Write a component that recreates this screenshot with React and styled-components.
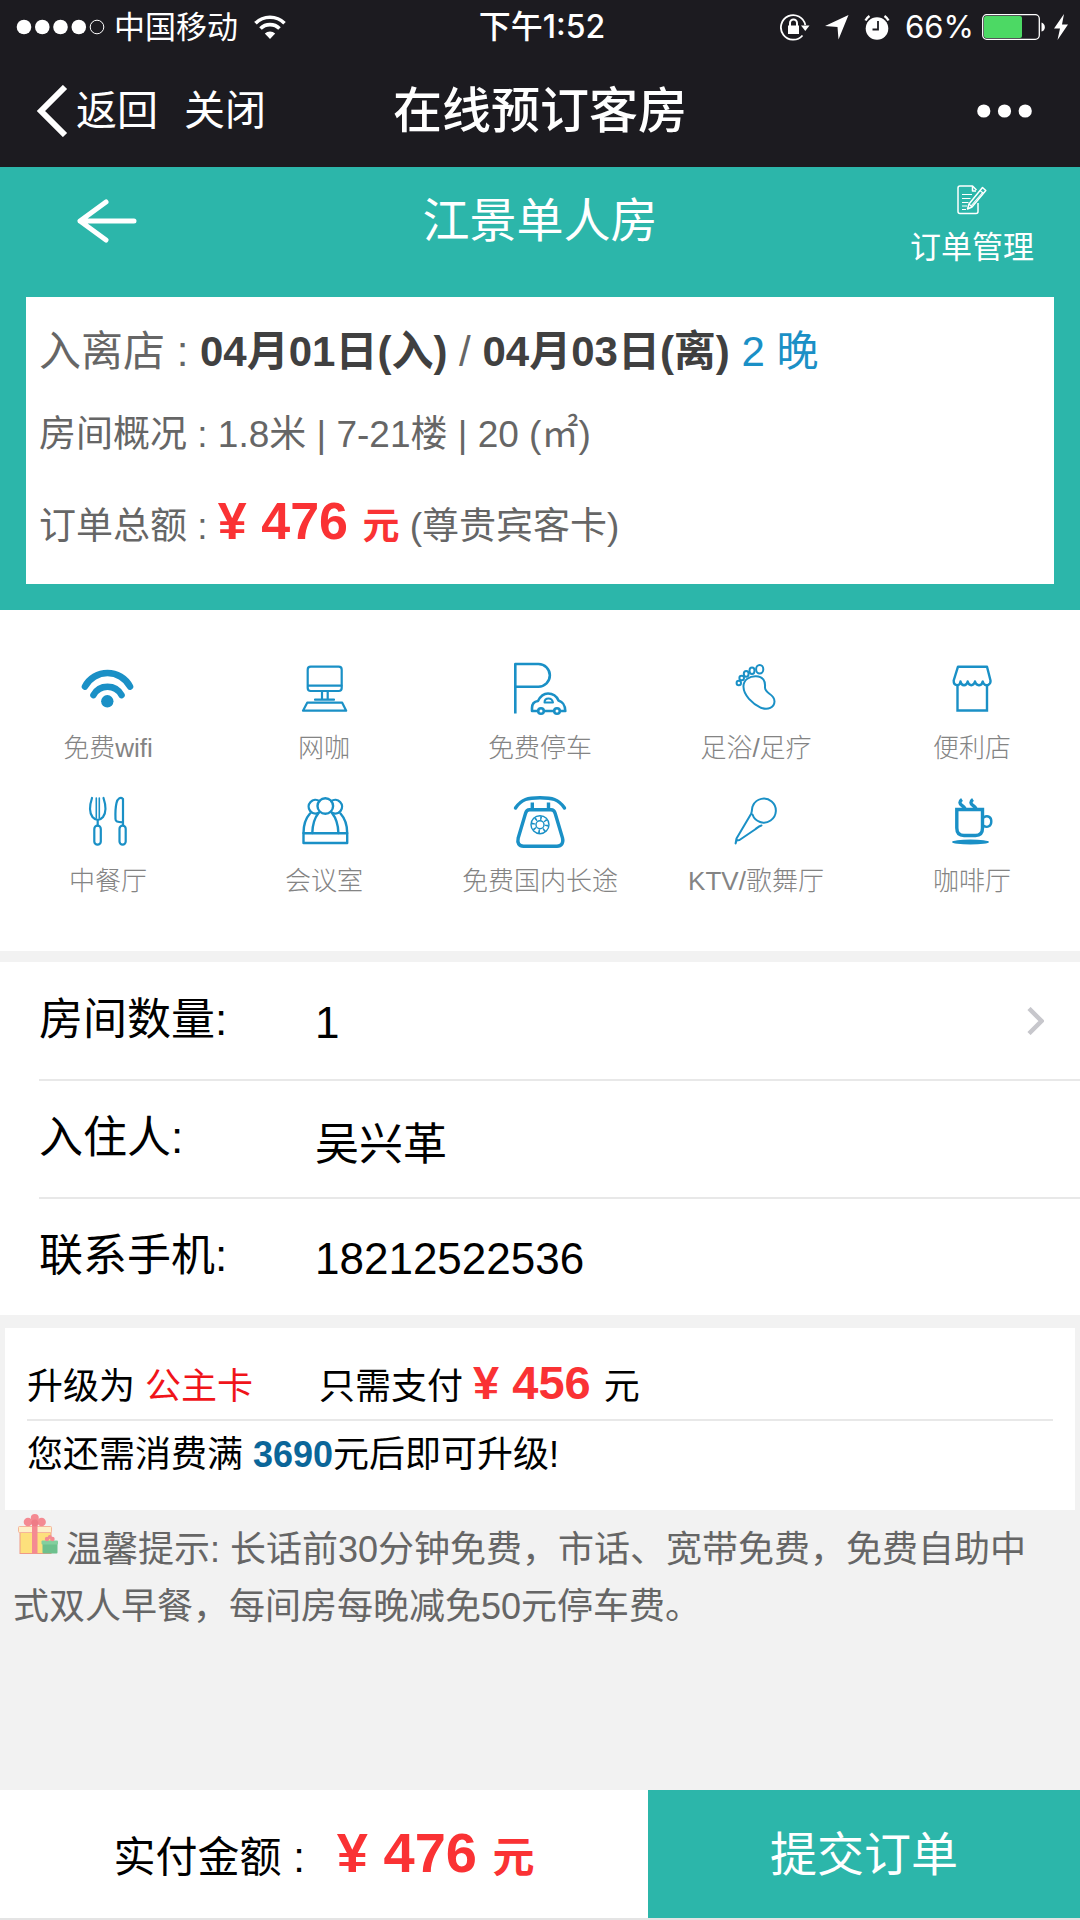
import { useState } from "react";
import styled, { createGlobalStyle } from "styled-components";

const teal = "#2cb6aa";
const blue = "#1a90c6";
const red = "#fa3234";

const GlobalStyle = createGlobalStyle`
  * {
    box-sizing: border-box;
  }

  body {
    margin: 0;
    background: #f2f2f2;
    font-family: "Liberation Sans", "Noto Sans CJK SC", sans-serif;
    color: #000;
  }

  button,
  input,
  select {
    margin: 0;
    padding: 0;
    border: 0;
    background: none;
    color: inherit;
    font: inherit;
  }

  a {
    color: inherit;
    text-decoration: none;
  }

  svg {
    display: block;
    flex: none;
  }
`;

const Page = styled.div`
  display: flex;
  flex-direction: column;
  min-height: 100vh;
`;

const StatusBar = styled.div`
  display: grid;
  grid-template-columns: 1fr auto 1fr;
  align-items: center;
  height: 54px;
  padding: 0 12px 0 16px;
  background: #1c1b20;
  color: #fff;
  font-family: Inter, "Noto Sans CJK SC", sans-serif;
  font-size: 31px;
  line-height: 36px;
`;

const StatusGroup = styled.div`
  display: flex;
  align-items: center;
  justify-content: ${(props) => props.$align || "flex-start"};
  gap: ${(props) => props.$gap}px;
`;

const Clock = styled.div`
  font-size: 32px;
  font-weight: 500;
`;

const NavBar = styled.div`
  display: grid;
  grid-template-columns: 1fr auto 1fr;
  align-items: center;
  height: 113px;
  padding: 0 36px;
  background: #1c1b20;
  color: #fff;
`;

const NavActions = styled.div`
  display: flex;
  gap: 26px;
`;

const NavButton = styled.button`
  display: flex;
  align-items: center;
  gap: 8px;
  font-size: 41px;
  line-height: 56px;
`;

const NavTitle = styled.div`
  font-size: 49px;
  font-weight: 500;
  line-height: 56px;
`;

const MoreButton = styled.button`
  justify-self: end;
  padding: 0 12px;
`;

const Hero = styled.section`
  padding: 0 26px 26px;
  background: ${teal};
`;

const HeroHeader = styled.header`
  display: grid;
  grid-template-columns: 1fr auto 1fr;
  align-items: start;
  padding: 18px 20px 34px;
  color: #fff;
`;

const BackButton = styled.button`
  display: flex;
  align-items: center;
  justify-self: start;
  height: 72px;
  padding: 0 30px;
`;

const RoomTitle = styled.h1`
  margin: 0;
  font-size: 47px;
  font-weight: 400;
  line-height: 72px;
`;

const OrdersLink = styled.a`
  display: flex;
  flex-direction: column;
  align-items: center;
  justify-self: end;
  gap: 16px;
  height: 78px;
  font-size: 31px;
  line-height: 34px;
`;

const Summary = styled.div`
  padding: 15px 13px 8px;
  background: #fff;
  color: #666;
`;

const SummaryRow = styled.div`
  font-size: ${(props) => (props.$large ? 42 : 37)}px;
  line-height: ${(props) => props.$height}px;
  white-space: nowrap;
`;

const StayDate = styled.b`
  color: #404040;
`;

const Nights = styled.span`
  color: ${blue};
`;

const Price = styled.b`
  color: ${red};
  font-size: ${(props) => props.$size}px;
  line-height: 1;
`;

const PriceUnit = styled.b`
  color: ${red};
`;

const Amenities = styled.ul`
  display: grid;
  grid-template-columns: repeat(5, 1fr);
  row-gap: 29px;
  margin: 0;
  padding: 49px 0 55px;
  list-style: none;
  background: #fff;
`;

const Amenity = styled.li`
  display: flex;
  flex-direction: column;
  align-items: center;
  gap: 14px;
  color: #848484;
  font-size: 26px;
  font-weight: 300;
  line-height: 30px;
  white-space: nowrap;
`;

const Form = styled.form`
  margin-top: 11px;
  padding: 1px 0 0 39px;
  background: #fff;
`;

const Field = styled.div`
  display: grid;
  grid-template-columns: 276px 1fr auto;
  align-items: center;
  height: 118px;
  padding-right: 36px;
  border-bottom: 2px solid #e8e8e8;
  font-size: 44px;
  line-height: 60px;

  &:last-child {
    height: 116px;
    border-bottom: 0;
  }
`;

const FieldLabel = styled.label`
  padding-bottom: 2px;
`;

const FieldInput = styled.input`
  width: 100%;
  height: 64px;
  padding-top: 4px;
  outline: 0;
`;

const FieldSelect = styled.select`
  width: 100%;
  height: 64px;
  padding-top: 4px;
  appearance: none;
  outline: 0;
`;

const Upgrade = styled.section`
  margin: 13px 5px 0;
  padding: 25px 22px 21px;
  background: #fff;
  font-size: 36px;
`;

const UpgradeRow = styled.div`
  display: flex;
  align-items: baseline;
  gap: 66px;
  height: 68px;
  line-height: 68px;
  border-bottom: ${(props) => (props.$divided ? "2px solid #e8e8e8" : "0")};
`;

const CardName = styled.span`
  color: #f0141a;
`;

const Spend = styled.b`
  color: #0b6699;
`;

const Tip = styled.p`
  margin: 0;
  padding: 11px 24px 0 13px;
  color: #666;
  font-size: 36px;
  line-height: 57px;

  svg {
    display: inline-block;
    margin: -8px 8px 0 5px;
    vertical-align: 8px;
  }
`;

const PayBar = styled.footer`
  display: grid;
  grid-template-columns: 3fr 2fr;
  height: 130px;
  margin-top: auto;
  border-bottom: 2px solid #e4e4e4;
`;

const PayTotal = styled.div`
  display: flex;
  align-items: baseline;
  justify-content: center;
  gap: 32px;
  padding-top: 8px;
  background: #fff;
  font-size: 42px;
  line-height: 120px;
`;

const SubmitButton = styled.button`
  padding-bottom: 8px;
  background: ${teal};
  color: #fff;
  font-size: 47px;
`;

const LineIcon = ({ width = 2.2, children }) => (
  <svg
    width="60"
    height="60"
    viewBox="0 0 60 60"
    fill="none"
    stroke={blue}
    strokeWidth={width}
    strokeLinecap="round"
    strokeLinejoin="round"
    aria-hidden="true"
  >
    {children}
  </svg>
);

const WifiIcon = () => (
  <LineIcon width={6.6}>
    <path d="M7 27.5A25.5 25.5 0 0 1 52 27.5" />
    <path d="M15.5 36A16 16 0 0 1 43.5 36" />
    <circle cx="29.3" cy="42.3" r="6.2" fill={blue} stroke="none" />
  </LineIcon>
);

const ComputerIcon = () => (
  <LineIcon>
    <rect x="13.7" y="7.7" width="34" height="24.3" rx="3" />
    <path d="M14 26.7H47.5M28 32.5V40M33.7 32.5V40M21 40.7H40" />
    <path d="M13.2 43.7H48.2L52.2 51.7H9L13.2 43.7Z" />
  </LineIcon>
);

const ParkingIcon = () => (
  <LineIcon width={2.6}>
    <path d="M5.3 54.5V5H28.5A11.3 11.3 0 0 1 28.5 27.7H5.3" strokeLinecap="butt" />
    <path d="M27.5 52H22V49C22 45 24.5 42.5 28 42C30.5 37 33 34.5 38 34.5C43.5 34.5 46.5 37 48.5 41.5C53 43 55 45.5 55.3 52H50.5M34.5 52H43.5" />
    <path d="M34.5 43.5C34.5 40.5 36.5 39.5 38.5 39.5C41 39.5 42.5 41 43 43.5Z" strokeWidth="2" />
    <circle cx="31" cy="52" r="2.8" />
    <circle cx="47" cy="52" r="2.8" />
  </LineIcon>
);

const FootIcon = () => (
  <LineIcon width={2}>
    <ellipse cx="33.7" cy="10.2" rx="3.6" ry="4.3" />
    <ellipse cx="26" cy="11.7" rx="2.5" ry="3.2" />
    <ellipse cx="20.2" cy="14.8" rx="2.4" ry="2.9" />
    <circle cx="15.7" cy="19" r="2.3" />
    <circle cx="12.8" cy="24" r="2.2" />
    <path d="M17.5 28C17 20.5 24 17 30 17.2C37 17.5 39.5 22 39 28C38.5 35.5 48.5 34 48.5 42.5C48.3 48.5 42 51.5 35 48.8C26 44.5 17.7 36 17.5 28Z" />
  </LineIcon>
);

const StoreIcon = () => (
  <LineIcon width={2.4}>
    <path d="M16 7.7H45L48.5 21.5C49 25.5 44.5 28 41.5 24.5L40.7 22.5C40 27 34.5 28 33 22.5C31.5 27.5 27 27.5 25.7 22.5C24.5 27.5 19.5 27.5 18.5 22.5C18 27.5 11.5 27.5 11.7 21.5Z" />
    <path d="M15.5 27V51.5H45V27" strokeLinejoin="miter" />
  </LineIcon>
);

const CutleryIcon = () => (
  <LineIcon>
    <path d="M14 6C11 15 11.5 21 14.5 25C17.5 28.7 22 28.7 25 25C28 21 28.5 15 25.5 6M19.7 28V33.5" />
    <path d="M18.3 6V26M21.3 6V26" strokeWidth="1.6" />
    <rect x="16.3" y="33.7" width="6.5" height="19" rx="3.2" />
    <path d="M45 33V7C42.5 4.5 39.5 6.5 38.5 11C37.3 16 37.3 22 37.5 27C37.5 29.5 39 30.3 45 30.3" />
    <rect x="41.5" y="33.7" width="6.2" height="19" rx="3.1" />
  </LineIcon>
);

const MeetingIcon = () => (
  <LineIcon width={2.4}>
    <circle cx="31.3" cy="14" r="7.8" />
    <path d="M25.5 9.2A6.8 6.8 0 1 0 25 20.5M37.2 9.2A6.8 6.8 0 1 1 37.7 20.5" />
    <path d="M16 21.5C11.5 26.5 9.5 33 9.5 41M46.5 21.5C51 26.5 53.2 33 53.2 41" />
    <path d="M24.5 21C20.5 26 18.5 33 18.3 41M38 21C42 26 44.2 33 44.4 41" />
    <rect x="9.5" y="41.2" width="43.7" height="9.8" />
  </LineIcon>
);

const PhoneIcon = () => (
  <LineIcon width={3.4}>
    <path d="M5.5 16C11.5 7 18 5.8 30 5.8C42 5.8 48.5 7 54.5 16" />
    <path d="M22.3 10.5V17M38.5 10.5V17" strokeLinecap="butt" />
    <path d="M19.5 17.8H41C43.5 17.8 44.5 19 45.2 21.5L52.5 46C53.7 51 51.5 54.2 47 54.2H13.5C9 54.2 7 51 8.2 46L15.5 21.5C16.2 19 17 17.8 19.5 17.8Z" />
    <g strokeWidth="1.4">
      <circle cx="30" cy="32.7" r="9" />
      <circle cx="30" cy="32.7" r="4" />
      <circle cx="30" cy="32.7" r="6.6" strokeWidth="3.6" strokeDasharray="1.6 3.58" strokeLinecap="butt" />
    </g>
  </LineIcon>
);

const MicIcon = () => (
  <LineIcon width={2}>
    <path d="M26.5 22.5A12 12 0 1 0 27 13.5C25.5 16 26.5 19 25 22L10.5 46.5L9.6 51.5L10.5 48.5L13.5 48L29 37.5C31.5 35.5 33 34 35.5 33.5" />
  </LineIcon>
);

const CoffeeIcon = () => (
  <LineIcon width={3.4}>
    <path d="M14.8 17.5H40.5V36C40.5 41 38 43.5 33.5 43.5H22C17 43.5 14.8 41 14.8 36Z" strokeLinejoin="miter" />
    <path d="M41.5 25.5C46 22.5 49.5 25.5 49.3 29.5C49.3 34 45.5 36.5 41 33.5" strokeWidth="2.4" />
    <path d="M20 7.5C17 9.5 17.5 12 20 13.5C22 14.8 23 16 23.5 17.5M31 7.5C28 9.5 28.5 12 31 13.5C33 14.8 34 16 34.5 17.5" strokeLinecap="butt" />
    <ellipse cx="28.5" cy="50" rx="18.5" ry="2.6" fill={blue} stroke="none" />
  </LineIcon>
);

const SignalDots = () => (
  <svg width="90" height="16" viewBox="0 0 90 16" fill="#fff" aria-hidden="true">
    <circle cx="8" cy="8" r="7.3" />
    <circle cx="26.3" cy="8" r="7.3" />
    <circle cx="44.5" cy="8" r="7.3" />
    <circle cx="62.8" cy="8" r="7.3" />
    <circle cx="81" cy="8" r="6.8" fill="none" stroke="#fff" strokeWidth="1" />
  </svg>
);

const StatusWifi = () => (
  <svg width="32" height="24" viewBox="0 0 32 24" fill="none" stroke="#fff" strokeWidth="3.6" aria-hidden="true">
    <path d="M1.5 8.2A20.5 20.5 0 0 1 30.5 8.2" />
    <path d="M6.5 13.5A13.5 13.5 0 0 1 25.5 13.5" />
    <path d="M16 24L10.8 18.5A7.5 7.5 0 0 1 21.2 18.5Z" fill="#fff" stroke="none" />
  </svg>
);

const RotationLock = () => (
  <svg width="30" height="28" viewBox="0 0 30 28" fill="none" stroke="#fff" strokeWidth="1.8" aria-hidden="true">
    <path d="M22.5 22.5A12.3 12.3 0 1 1 25.3 12" />
    <path d="M21 12.5H29.5L25.3 18Z" fill="#fff" stroke="none" />
    <rect x="8" y="12.5" width="11" height="8.5" fill="#fff" stroke="none" />
    <path d="M10 13V10A3.5 3.5 0 0 1 17 10V13" strokeWidth="2" />
  </svg>
);

const LocationArrow = () => (
  <svg width="24" height="26" viewBox="0 0 24 26" fill="#fff" aria-hidden="true">
    <path d="M23.5 1L13.5 25.5L12.5 13L0 12Z" />
  </svg>
);

const AlarmIcon = () => (
  <svg width="26" height="26" viewBox="0 0 26 26" aria-hidden="true">
    <circle cx="13" cy="14.5" r="11.3" fill="#fff" />
    <path d="M1.5 6.5A12 12 0 0 1 5.5 2M20.5 2A12 12 0 0 1 24.5 6.5" fill="none" stroke="#fff" strokeWidth="2.4" />
    <path d="M14 7V15.5H8.5" fill="none" stroke="#1c1b20" strokeWidth="1.8" />
  </svg>
);

const BatteryIcon = () => (
  <svg width="64" height="26" viewBox="0 0 64 26" aria-hidden="true">
    <rect x="0.7" y="0.7" width="56.6" height="24.6" rx="4" fill="none" stroke="#fff" strokeWidth="1.3" />
    <rect x="2" y="2" width="38" height="22" rx="2" fill="#4cd964" />
    <path d="M59.5 8.5C64 10 64 16.5 59.5 17.5Z" fill="#fff" />
  </svg>
);

const BoltIcon = () => (
  <svg width="14" height="26" viewBox="0 0 14 26" fill="#fff" aria-hidden="true">
    <path d="M10 0L0 14.5H6L3.5 26L14 10.5H8Z" />
  </svg>
);

const OrdersIcon = () => (
  <svg width="30" height="30" viewBox="0 0 30 30" fill="none" stroke="#fff" strokeWidth="1.5" strokeLinejoin="round" aria-hidden="true">
    <path d="M21 18V26.5Q21 28.5 19 28.5H3Q1 28.5 1 26.5V3Q1 1 3 1H15.5L19.5 5" />
    <path d="M15.5 1V6H19" />
    <path d="M5 9.5H15M5 13.5H13.5M5 17.5H11.5M5 21H10M5 24.5H9" strokeWidth="1.2" />
    <path d="M25.5 2.5L28.8 5.5L15 22L10.5 24L12 19Z" />
    <path d="M26 7L14 21M23 5.5L26.5 8.5M12 19L15 22" strokeWidth="1.1" />
  </svg>
);

const GiftIcon = () => (
  <svg width="40" height="40" viewBox="0 0 40 40" aria-hidden="true">
    <rect x="2" y="16" width="31" height="23.5" fill="#fde07c" stroke="#f09a86" />
    <rect x="0.5" y="12.5" width="33" height="6" rx="1" fill="#fdf0c8" stroke="#f5b59a" />
    <rect x="14" y="11" width="5.5" height="28.5" fill="#f48a92" />
    <circle cx="16.8" cy="4" r="4" fill="#f48a92" />
    <circle cx="10" cy="8" r="4.3" fill="#f48a92" />
    <circle cx="23.6" cy="8" r="4.3" fill="#f48a92" />
    <circle cx="16.8" cy="9" r="3.5" fill="#ee7c86" />
    <rect x="24.5" y="29" width="15" height="10.5" rx="1" fill="#6dc08d" />
    <rect x="23.5" y="26.5" width="16.5" height="4" rx="1" fill="#83cf9e" />
    <circle cx="29" cy="25" r="2.2" fill="#f48a92" />
    <circle cx="34.5" cy="25" r="2.2" fill="#f48a92" />
    <circle cx="31.8" cy="23" r="2" fill="#f48a92" />
  </svg>
);

const amenities = [
  { label: "免费wifi", Icon: WifiIcon },
  { label: "网咖", Icon: ComputerIcon },
  { label: "免费停车", Icon: ParkingIcon },
  { label: "足浴/足疗", Icon: FootIcon },
  { label: "便利店", Icon: StoreIcon },
  { label: "中餐厅", Icon: CutleryIcon },
  { label: "会议室", Icon: MeetingIcon },
  { label: "免费国内长途", Icon: PhoneIcon },
  { label: "KTV/歌舞厅", Icon: MicIcon },
  { label: "咖啡厅", Icon: CoffeeIcon },
];

function PhoneChrome() {
  return (
    <>
      <StatusBar>
        <StatusGroup $gap={16}>
          <StatusGroup $gap={8}>
            <SignalDots />
            <span>中国移动</span>
          </StatusGroup>
          <StatusWifi />
        </StatusGroup>
        <Clock>下午1:52</Clock>
        <StatusGroup $gap={15} $align="flex-end">
          <RotationLock />
          <LocationArrow />
          <AlarmIcon />
          <StatusGroup $gap={8}>
            <span>66%</span>
            <BatteryIcon />
            <BoltIcon />
          </StatusGroup>
        </StatusGroup>
      </StatusBar>
      <NavBar>
        <NavActions>
          <NavButton type="button">
            <svg width="32" height="52" viewBox="0 0 32 52" fill="none" stroke="#fff" strokeWidth="6" aria-hidden="true">
              <path d="M29 2L5 26L29 50" />
            </svg>
            返回
          </NavButton>
          <NavButton type="button">关闭</NavButton>
        </NavActions>
        <NavTitle>在线预订客房</NavTitle>
        <MoreButton type="button" aria-label="更多">
          <svg width="55" height="14" viewBox="0 0 55 14" fill="#fff">
            <circle cx="6.8" cy="7" r="6.6" />
            <circle cx="27.5" cy="7" r="6.6" />
            <circle cx="48.2" cy="7" r="6.6" />
          </svg>
        </MoreButton>
      </NavBar>
    </>
  );
}

function BookingForm() {
  const [form, setForm] = useState({
    rooms: "1",
    guest: "吴兴革",
    phone: "18212522536",
  });

  const onChange = (e) => {
    setForm({ ...form, [e.target.name]: e.target.value });
  };

  return (
    <Form id="booking" onSubmit={(e) => e.preventDefault()}>
      <Field>
        <FieldLabel htmlFor="rooms">房间数量:</FieldLabel>
        <FieldSelect id="rooms" name="rooms" value={form.rooms} onChange={onChange}>
          <option value="1">1</option>
          <option value="2">2</option>
          <option value="3">3</option>
        </FieldSelect>
        <svg width="17" height="28" viewBox="0 0 17 28" fill="none" stroke="#c7c7cc" strokeWidth="4.5" aria-hidden="true">
          <path d="M2 1.5L14.5 14L2 26.5" />
        </svg>
      </Field>
      <Field>
        <FieldLabel htmlFor="guest">入住人:</FieldLabel>
        <FieldInput id="guest" name="guest" value={form.guest} onChange={onChange} />
      </Field>
      <Field>
        <FieldLabel htmlFor="phone">联系手机:</FieldLabel>
        <FieldInput id="phone" name="phone" type="tel" value={form.phone} onChange={onChange} />
      </Field>
    </Form>
  );
}

function App() {
  return (
    <Page>
      <GlobalStyle />
      <PhoneChrome />
      <Hero>
        <HeroHeader>
          <BackButton type="button" aria-label="返回">
            <svg width="62" height="44" viewBox="0 0 62 44" fill="none" stroke="#fff" strokeWidth="5" strokeLinecap="round" strokeLinejoin="round">
              <path d="M58 22H4M30 3L4 22L30 41" />
            </svg>
          </BackButton>
          <RoomTitle>江景单人房</RoomTitle>
          <OrdersLink href="#orders">
            <OrdersIcon />
            订单管理
          </OrdersLink>
        </HeroHeader>
        <Summary>
          <SummaryRow $large $height={80}>
            入离店 : <StayDate>04月01日(入)</StayDate> / <StayDate>04月03日(离)</StayDate>{" "}
            <Nights>2 晚</Nights>
          </SummaryRow>
          <SummaryRow $height={86}>房间概况 : 1.8米 | 7-21楼 | 20 (㎡)</SummaryRow>
          <SummaryRow $height={98}>
            订单总额 : <Price $size={52}>¥ 476 </Price>
            <PriceUnit>元</PriceUnit> (尊贵宾客卡)
          </SummaryRow>
        </Summary>
      </Hero>
      <Amenities>
        {amenities.map(({ label, Icon }) => (
          <Amenity key={label}>
            <Icon />
            {label}
          </Amenity>
        ))}
      </Amenities>
      <BookingForm />
      <Upgrade>
        <UpgradeRow $divided>
          <span>
            升级为 <CardName>公主卡</CardName>
          </span>
          <span>
            只需支付 <Price $size={47}>¥ 456 </Price>元
          </span>
        </UpgradeRow>
        <UpgradeRow>
          <span>
            您还需消费满 <Spend>3690</Spend>元后即可升级!
          </span>
        </UpgradeRow>
      </Upgrade>
      <Tip>
        <GiftIcon />
        温馨提示: 长话前30分钟免费，市话、宽带免费，免费自助中式双人早餐，每间房每晚减免50元停车费。
      </Tip>
      <PayBar>
        <PayTotal>
          <span>实付金额 :</span>
          <span>
            <Price $size={56}>¥ 476 </Price>
            <PriceUnit>元</PriceUnit>
          </span>
        </PayTotal>
        <SubmitButton type="submit" form="booking">
          提交订单
        </SubmitButton>
      </PayBar>
    </Page>
  );
}

export default App;
